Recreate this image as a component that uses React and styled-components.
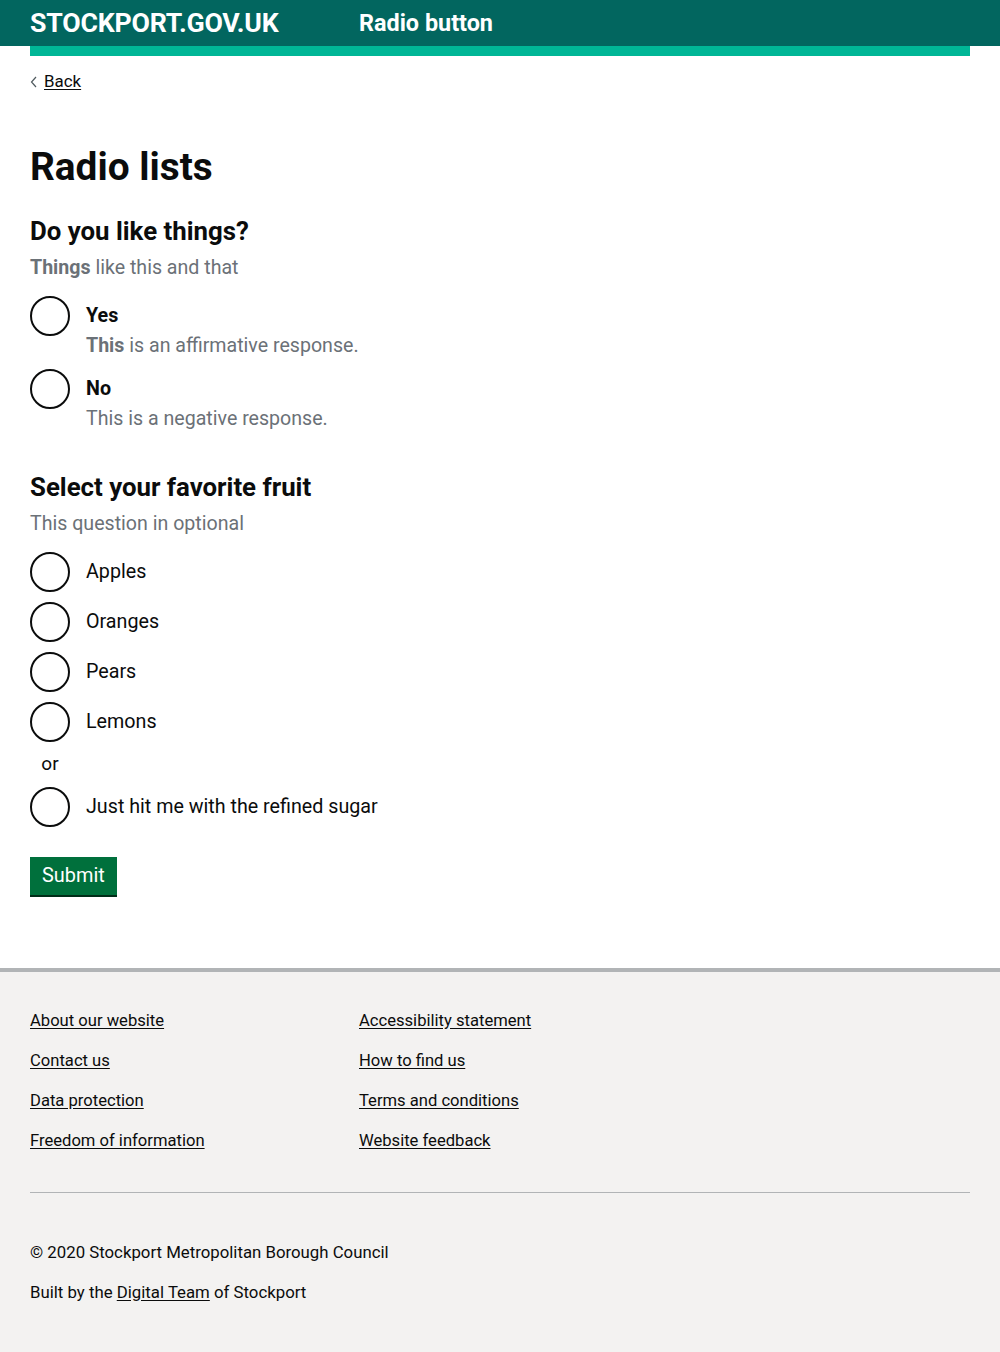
import React from "react";
import styled, { createGlobalStyle } from "styled-components";

const Global = createGlobalStyle`
  html, body { margin: 0; padding: 0; background: #fff; }
  body { font-family: Roboto, "Noto Sans", Arial, sans-serif; color: #0b0c0c; }
  * { box-sizing: border-box; }
`;

const Header = styled.header`
  background: #02665f;
`;
const HeaderInner = styled.div`
  height: 46px;
  padding: 0 30px;
  display: flex;
  align-items: center;
`;
const Logo = styled.a`
  color: #fff;
  font-weight: 700;
  font-size: 26.7px;
  letter-spacing: -0.2px;
  text-decoration: none;
  width: 329px;
`;
const ServiceName = styled.span`
  color: #fff;
  font-weight: 700;
  font-size: 23.4px;
`;
const Accent = styled.div`
  background: #fff;
  padding: 0 30px;
  &::before {
    content: "";
    display: block;
    height: 10px;
    background: #00b696;
  }
`;

const Main = styled.main`
  padding: 15px 30px 73px;
`;
const BackLink = styled.a`
  display: inline-flex;
  align-items: center;
  gap: 6px;
  font-size: 16.9px;
  line-height: 20px;
  color: #0b0c0c;
  text-decoration: underline;
  text-underline-offset: 2px;
  svg { margin-top: 1px; }
`;
const H1 = styled.h1`
  margin: 53px 0 0;
  font-size: 38.8px;
  line-height: 44px;
  font-weight: 700;
`;
const Fieldset = styled.fieldset`
  border: 0;
  padding: 0;
  margin: ${(p) => p.$top}px 0 0;
`;
const Legend = styled.legend`
  padding: 0;
  font-size: 25.8px;
  line-height: 30px;
  font-weight: 700;
`;
const Hint = styled.div`
  margin-top: 10px;
  font-size: 19.6px;
  line-height: 24px;
  color: #6b7177;
  b { font-weight: 700; }
`;
const Options = styled.div`
  margin-top: 16px;
  display: flex;
  flex-direction: column;
  gap: ${(p) => p.$gap}px;
`;
const Option = styled.label`
  display: grid;
  grid-template-columns: 40px 1fr;
  column-gap: 16px;
  align-items: start;
`;
const Circle = styled.span`
  width: 40px;
  height: 40px;
  border: 2px solid #0b0c0c;
  border-radius: 50%;
  grid-row: span 2;
`;
const Label = styled.span`
  font-size: 19.7px;
  line-height: 40px;
  font-weight: ${(p) => (p.$bold ? 700 : 400)};
  color: #0b0c0c;
`;
const OptionHint = styled.span`
  grid-column: 2;
  font-size: 19.6px;
  line-height: 24px;
  color: #6b7177;
  margin-top: -2px;
  b { font-weight: 700; }
`;
const Or = styled.div`
  width: 40px;
  text-align: center;
  font-size: 19px;
  line-height: 24px;
  margin-bottom: 1px;
`;
const Button = styled.button`
  margin-top: 30px;
  background: #00703c;
  color: #fff;
  border: 0;
  box-shadow: 0 2px 0 #002d18;
  font-family: inherit;
  font-size: 19.9px;
  line-height: 24px;
  padding: 7px 12px 7px;
  height: 38px;
  cursor: pointer;
`;

const Footer = styled.footer`
  background: #f3f2f1;
  border-top: 4px solid #b1b4b6;
  padding: 39px 30px 51px;
`;
const LinkGrid = styled.ul`
  list-style: none;
  margin: 0;
  padding: 0;
  display: grid;
  grid-template-columns: 329px 1fr;
  row-gap: 20px;
  li { line-height: 20px; }
`;
const FooterLink = styled.a`
  font-size: 16.6px;
  line-height: 20px;
  color: #0b0c0c;
  text-decoration: underline;
  text-underline-offset: 2px;
`;
const Rule = styled.hr`
  border: 0;
  border-top: 1px solid #b1b4b6;
  margin: 41px 0 49px;
`;
const SmallGroup = styled.div`
  display: flex;
  flex-direction: column;
  gap: 20px;
`;
const Small = styled.p`
  margin: 0;
  font-size: 16.8px;
  line-height: 20px;
  color: #0b0c0c;
  a { color: #0b0c0c; text-underline-offset: 2px; }
`;

const yesNo = [
  { label: "Yes", hint: <><b>This</b> is an affirmative response.</> },
  { label: "No", hint: "This is a negative response." },
];
const fruits = ["Apples", "Oranges", "Pears", "Lemons"];
const links = [
  ["About our website", "Accessibility statement"],
  ["Contact us", "How to find us"],
  ["Data protection", "Terms and conditions"],
  ["Freedom of information", "Website feedback"],
];

export default function App() {
  return (
    <>
      <Global />
      <Header>
        <HeaderInner>
          <Logo href="#">STOCKPORT.GOV.UK</Logo>
          <ServiceName>Radio button</ServiceName>
        </HeaderInner>
      </Header>
      <Accent />
      <Main>
        <BackLink href="#">
          <svg width="8" height="12" viewBox="0 0 8 12" fill="none">
            <path d="M6 1L1.5 6L6 11" stroke="#505a5f" strokeWidth="1.2" />
          </svg>
          Back
        </BackLink>
        <H1>Radio lists</H1>
        <Fieldset $top={27}>
          <Legend>Do you like things?</Legend>
          <Hint><b>Things</b> like this and that</Hint>
          <Options $gap={11}>
            {yesNo.map((o) => (
              <Option key={o.label}>
                <Circle />
                <Label $bold>{o.label}</Label>
                <OptionHint>{o.hint}</OptionHint>
              </Option>
            ))}
          </Options>
        </Fieldset>
        <Fieldset $top={41}>
          <Legend>Select your favorite fruit</Legend>
          <Hint>This question in optional</Hint>
          <Options $gap={10}>
            {fruits.map((f) => (
              <Option key={f}>
                <Circle />
                <Label>{f}</Label>
              </Option>
            ))}
            <Or>or</Or>
            <Option>
              <Circle />
              <Label>Just hit me with the refined sugar</Label>
            </Option>
          </Options>
        </Fieldset>
        <Button>Submit</Button>
      </Main>
      <Footer>
        <LinkGrid>
          {links.flat().map((l) => (
            <li key={l}><FooterLink href="#">{l}</FooterLink></li>
          ))}
        </LinkGrid>
        <Rule />
        <SmallGroup>
          <Small>© 2020 Stockport Metropolitan Borough Council</Small>
          <Small>Built by the <a href="#">Digital Team</a> of Stockport</Small>
        </SmallGroup>
      </Footer>
    </>
  );
}
